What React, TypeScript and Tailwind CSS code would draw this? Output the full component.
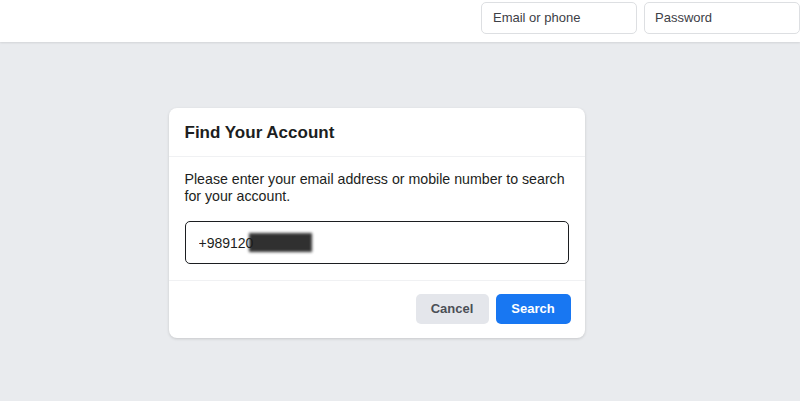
import React, { useState } from 'react';

export default function App() {
  const [contact, setContact] = useState('+989120');

  return (
    <div className="min-h-[401px] bg-[#e9ebee] font-['Liberation_Sans',Arial,sans-serif]">
      <header className="h-[42px] bg-white shadow-[0_1px_2px_rgba(0,0,0,0.1)] flex justify-end items-start pt-[2px] gap-[7px]">
        <input
          type="text"
          placeholder="Email or phone"
          className="w-[156px] h-[32px] border border-[#dddfe2] rounded-[5px] px-[11px] pb-[1px] text-[13px] placeholder:text-[#3d4046] outline-none"
        />
        <input
          type="password"
          placeholder="Password"
          className="w-[156px] h-[32px] border border-[#dddfe2] rounded-[5px] px-[10px] pb-[1px] text-[13px] placeholder:text-[#3d4046] outline-none"
        />
      </header>

      <div className="flex justify-center pt-[66px] pr-[47px]">
        <div className="w-[416px] bg-white rounded-[8px] shadow-[0_1px_3px_rgba(0,0,0,0.15)]">
          <div className="h-[49px] flex items-center px-[16px] pt-[2px] border-b border-[#f0f1f3]">
            <h2 className="text-[17px] font-bold text-[#1c1e21]">Find Your Account</h2>
          </div>
          <div className="px-[16px] pt-[14px] pb-[16px] border-b border-[#f0f1f3]">
            <p className="text-[14.2px] leading-[17px] text-[#1c1e21] mb-[16px]">
              Please enter your email address or mobile number to search for your account.
            </p>
            <div className="relative">
              <input
                type="text"
                value={contact}
                onChange={(e) => setContact(e.target.value)}
                className="w-full h-[43px] border border-[#1c1e21] rounded-[5px] px-[13px] text-[14px] text-[#1c1e21] outline-none"
              />
              {/* smudged digits */}
              <span className="absolute left-[64px] top-[12px] h-[19px] w-[63px] bg-[#1a1a1a] blur-[1.5px] opacity-90" />
            </div>
          </div>
          <div className="flex justify-end gap-[7px] px-[14px] pt-[13px] pb-[14px]">
            <button className="h-[30px] w-[73px] rounded-[5px] bg-[#e4e6eb] text-[#4b4f56] text-[13px] font-bold">
              Cancel
            </button>
            <button className="h-[30px] w-[75px] rounded-[5px] bg-[#1877f2] text-white text-[13px] font-bold">
              Search
            </button>
          </div>
        </div>
      </div>
    </div>
  );
}
